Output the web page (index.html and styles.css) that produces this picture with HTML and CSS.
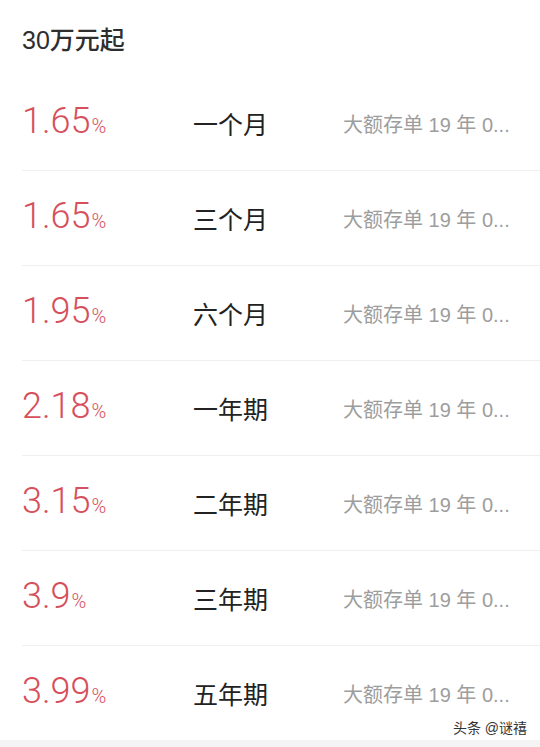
FILE: index.html
```html
<!DOCTYPE html>
<html lang="zh-CN">
<head>
<meta charset="utf-8">
<title>大额存单</title>
<link rel="stylesheet" href="styles.css">
</head>
<body>
<div class="page">
  <div class="header">30万元起</div>
  <div class="list">
    <div class="row"><div class="rate">1.65<span class="pct">%</span></div><div class="term">一个月</div><div class="desc">大额存单 19 年 0...</div></div>
    <div class="row"><div class="rate">1.65<span class="pct">%</span></div><div class="term">三个月</div><div class="desc">大额存单 19 年 0...</div></div>
    <div class="row"><div class="rate">1.95<span class="pct">%</span></div><div class="term">六个月</div><div class="desc">大额存单 19 年 0...</div></div>
    <div class="row"><div class="rate">2.18<span class="pct">%</span></div><div class="term">一年期</div><div class="desc">大额存单 19 年 0...</div></div>
    <div class="row"><div class="rate">3.15<span class="pct">%</span></div><div class="term">二年期</div><div class="desc">大额存单 19 年 0...</div></div>
    <div class="row"><div class="rate">3.9<span class="pct">%</span></div><div class="term">三年期</div><div class="desc">大额存单 19 年 0...</div></div>
    <div class="row"><div class="rate">3.99<span class="pct">%</span></div><div class="term">五年期</div><div class="desc">大额存单 19 年 0...</div></div>
  </div>
  <div class="band"></div>
  <div class="watermark">头条 @谜禧</div>
</div>
</body>
</html>
```
FILE: styles.css
```css
html, body {
  margin: 0;
  padding: 0;
  background: #ffffff;
}
body {
  font-family: "Liberation Sans", "Noto Sans CJK SC", sans-serif;
  color: #333333;
}
.page {
  position: relative;
  width: 540px;
  height: 747px;
  overflow: hidden;
}
.header {
  box-sizing: border-box;
  height: 76px;
  padding: 25px 0 0 22px;
  font-size: 25px;
  line-height: 30px;
  font-weight: 500;
  color: #2e2e2e;
}
.list {
  padding-left: 22px;
}
.row {
  box-sizing: border-box;
  height: 95px;
  display: grid;
  grid-template-columns: 171px 150px 1fr;
  align-items: center;
  border-bottom: 1px solid #efefef;
}
.row:last-child {
  border-bottom: none;
  height: 94px;
}
.rate {
  font-family: "Roboto", "Liberation Sans", sans-serif;
  font-weight: 300;
  font-size: 36px;
  color: #d6505b;
  white-space: nowrap;
  padding-bottom: 4px;
}
.pct {
  font-size: 20px;
  margin-left: 1px;
}
.term {
  font-size: 25px;
  color: #222222;
  font-weight: 400;
  white-space: nowrap;
}
.desc {
  font-size: 20px;
  color: #9d9d9d;
  white-space: nowrap;
}
.band {
  height: 7px;
  background: #f4f4f4;
}
.watermark {
  position: absolute;
  right: 13px;
  top: 719px;
  font-size: 14px;
  line-height: 18px;
  color: #333333;
}
```
